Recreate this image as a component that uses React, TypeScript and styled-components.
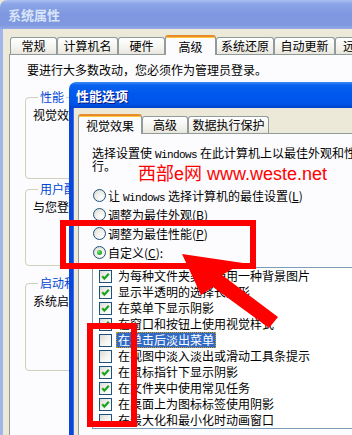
import React from 'react'
import styled, { createGlobalStyle, css } from 'styled-components'

const GlobalStyle = createGlobalStyle`
  html, body {
    margin: 0;
    padding: 0;
    overflow: hidden;
    background: #ece9d8;
  }
  body {
    font-family: "Noto Sans CJK SC", "Noto Sans", sans-serif;
    font-size: 12px;
    color: #000;
  }
`

const Screen = styled.div`
  position: relative;
  width: 352px;
  height: 435px;
  overflow: hidden;
`

const Window = styled.div`
  display: flex;
  flex-direction: column;
  width: 380px;
  height: 100%;
`

const TitleBar = styled.div<{ $active?: boolean }>`
  flex: none;
  height: ${({ $active }) => ($active ? 26 : 29)}px;
  display: flex;
  align-items: center;
  padding-left: ${({ $active }) => ($active ? 7 : 8)}px;
  border-radius: 7px 7px 0 0;
  font-size: 13px;
  font-weight: 700;
  white-space: nowrap;
  ${({ $active }) =>
    $active
      ? css`
          color: #fff;
          text-shadow: 1px 1px #0a1883;
          background: linear-gradient(#3d8df5 0%, #0a62ee 12%, #0058ee 45%, #0054e8 85%, #0040c8 100%);
        `
      : css`
          color: #d8e4f8;
          background: linear-gradient(#aabff2 0%, #8ca5e7 14%, #7e97e0 50%, #7f98e0 86%, #94aae8 100%);
        `}
`

const OuterBody = styled.div`
  flex: 1;
  min-height: 0;
  display: flex;
  flex-direction: column;
  background: #ece9d8;
  border-left: 3px solid #a2b5ea;
  padding: 6px 0 0 6px;
`

const DialogBody = styled.div`
  flex: 1;
  min-height: 0;
  display: flex;
  flex-direction: column;
  background: #ece9d8;
  border-left: 4px solid #0b46dc;
  box-shadow: inset 1px 0 #3a6ee8;
  padding: 6px 0 0 5px;
`

const TabRow = styled.div<{ $inset?: number }>`
  flex: none;
  display: flex;
  align-items: flex-end;
  height: 19px;
  padding-left: ${({ $inset }) => $inset ?? 0}px;
  position: relative;
  z-index: 1;
`

const Tab = styled.div<{ $w: number; $selected?: boolean }>`
  flex: none;
  box-sizing: border-box;
  width: ${({ $w }) => $w}px;
  height: ${({ $selected }) => ($selected ? 20 : 17)}px;
  margin-bottom: ${({ $selected }) => ($selected ? -1 : 0)}px;
  border: 1px solid #919b9c;
  border-bottom: none;
  border-radius: 3px 3px 0 0;
  display: flex;
  align-items: center;
  justify-content: center;
  white-space: nowrap;
  overflow: hidden;
  line-height: 14px;
  background: linear-gradient(#ffffff, #f4f3ee 60%, #e8e6dc);
  ${({ $selected }) =>
    $selected &&
    css`
      background: #fcfcfe;
      border-top: 2px solid #e68b2c;
      box-shadow: inset 0 1px #ffc83c;
      padding-top: 1px;
    `}
`

const Panel = styled.div<{ $pad: string }>`
  flex: 1;
  min-height: 0;
  overflow: hidden;
  background: #fcfcfe;
  border: 1px solid #919b9c;
  border-right: none;
  border-bottom: none;
  padding: ${({ $pad }) => $pad};
  display: flex;
  flex-direction: column;
  align-items: flex-start;
  & > * {
    flex: none;
  }
`

const Line = styled.div<{ $lh?: number; $ml?: number }>`
  line-height: ${({ $lh }) => $lh ?? 14}px;
  margin-left: ${({ $ml }) => $ml ?? 0}px;
  white-space: nowrap;
`

const Group = styled.fieldset<{ $h: number; $mt: number }>`
  box-sizing: border-box;
  width: 300px;
  height: ${({ $h }) => $h}px;
  margin: ${({ $mt }) => $mt}px 0 0 0;
  padding: 0 7px;
  min-width: 0;
  border: 1px solid #d0d0bf;
  border-radius: 4px;
`

const Legend = styled.legend`
  color: #0046d5;
  line-height: 14px;
  padding: 0 2px;
  margin-left: 5px;
`

const GroupText = styled.div`
  line-height: 14px;
  margin-top: 4px;
  white-space: nowrap;
`

const Dialog = styled.div`
  position: absolute;
  left: 69px;
  top: 82px;
  width: 300px;
  height: 360px;
  display: flex;
  flex-direction: column;
`

const Mono = styled.span`
  font-family: "Liberation Mono", "DejaVu Sans Mono", monospace;
  font-size: 11px;
  line-height: 0;
  letter-spacing: -0.6px;
  padding: 0 3px;
`

const RadioList = styled.div`
  margin-top: 14px;
  margin-left: 1px;
  display: flex;
  flex-direction: column;
`

const RadioRow = styled.div`
  height: 19px;
  flex: none;
  display: flex;
  align-items: center;
  white-space: nowrap;
`

const RadioText = styled.span`
  line-height: 14px;
`

const RadioCircle = styled.span<{ $on?: boolean }>`
  flex: none;
  box-sizing: border-box;
  width: 13px;
  height: 13px;
  margin-right: 2px;
  border-radius: 50%;
  border: 1px solid #1c5180;
  background: radial-gradient(circle at 65% 70%, #ffffff 0%, #f0f0ea 45%, #d6d6ce 100%);
  display: flex;
  align-items: center;
  justify-content: center;
  &::after {
    content: '';
    display: ${({ $on }) => ($on ? 'block' : 'none')};
    width: 5px;
    height: 5px;
    border-radius: 50%;
    background: radial-gradient(circle at 35% 35%, #6ee26e, #21a121 70%);
  }
`

const ListBox = styled.div`
  margin-top: 5px;
  width: 300px;
  border: 1px solid #7f9db9;
  border-right: none;
  background: #fff;
  display: flex;
  flex-direction: column;
`

const Item = styled.div`
  height: 16px;
  flex: none;
  display: flex;
  align-items: center;
  padding-left: 6px;
  white-space: nowrap;
`

const Box = styled.span`
  flex: none;
  box-sizing: border-box;
  width: 13px;
  height: 13px;
  margin-right: 5px;
  border: 1px solid #1c5180;
  background: linear-gradient(135deg, #dcdcd5 0%, #f2f2ee 50%, #ffffff 100%);
  display: flex;
  align-items: center;
  justify-content: center;
`

const ItemLabel = styled.span<{ $sel?: boolean }>`
  line-height: 14px;
  padding: 0 1px;
  border: 1px solid transparent;
  margin-left: -1px;
  ${({ $sel }) =>
    $sel &&
    css`
      background: #316ac5;
      color: #fff;
      border: 1px dotted #d8a000;
    `}
`

const Watermark = styled.div`
  position: absolute;
  left: 138px;
  top: 163px;
  color: #ff0000;
  font-family: "Liberation Sans", "Noto Sans CJK SC", sans-serif;
  font-size: 18px;
  line-height: 22px;
  white-space: nowrap;
`

const RedBox = styled.div<{ $x: number; $y: number; $w: number; $h: number }>`
  position: absolute;
  left: ${({ $x }) => $x}px;
  top: ${({ $y }) => $y}px;
  width: ${({ $w }) => $w}px;
  height: ${({ $h }) => $h}px;
  box-sizing: border-box;
  border: 6px solid #ff0000;
`

const Overlay = styled.svg`
  position: absolute;
  left: 0;
  top: 0;
  pointer-events: none;
`

const Check = () => (
  <svg width="9" height="9" viewBox="0 0 9 9">
    <polyline points="1.2,4.2 3.4,6.6 7.8,1.8" fill="none" stroke="#21a121" strokeWidth="2.2" />
  </svg>
)

const effects: [string, boolean][] = [
  ['为每种文件夹类型使用一种背景图片', true],
  ['显示半透明的选择长方形', true],
  ['在菜单下显示阴影', true],
  ['在窗口和按钮上使用视觉样式', true],
  ['在单击后淡出菜单', false],
  ['在视图中淡入淡出或滑动工具条提示', false],
  ['在鼠标指针下显示阴影', true],
  ['在文件夹中使用常见任务', true],
  ['在桌面上为图标标签使用阴影', true],
  ['在最大化和最小化时动画窗口', false],
]

export default function App() {
  return (
    <Screen>
      <GlobalStyle />
      <Window>
        <TitleBar>系统属性</TitleBar>
        <OuterBody>
          <TabRow $inset={1}>
            <Tab $w={47}>常规</Tab>
            <Tab $w={61}>计算机名</Tab>
            <Tab $w={47}>硬件</Tab>
            <Tab $w={51} $selected>高级</Tab>
            <Tab $w={58}>系统还原</Tab>
            <Tab $w={61}>自动更新</Tab>
            <Tab $w={40}>远程</Tab>
          </TabRow>
          <Panel $pad="8px 0 0 15px">
            <Line $ml={2}>要进行大多数改动，您必须作为管理员登录。</Line>
            <Group $h={89} $mt={13}>
              <Legend>性能</Legend>
              <GroupText>视觉效果，处理器计划，内存使用，以及虚拟内存</GroupText>
            </Group>
            <Group $h={84} $mt={3}>
              <Legend>用户配置文件</Legend>
              <GroupText>与您登录有关的桌面设置</GroupText>
            </Group>
            <Group $h={95} $mt={10}>
              <Legend>启动和故障恢复</Legend>
              <GroupText>系统启动、系统失败和调试信息</GroupText>
            </Group>
          </Panel>
        </OuterBody>
      </Window>

      <Dialog>
        <TitleBar $active>性能选项</TitleBar>
        <DialogBody>
          <TabRow>
            <Tab $w={64} $selected>视觉效果</Tab>
            <Tab $w={46}>高级</Tab>
            <Tab $w={81}>数据执行保护</Tab>
          </TabRow>
          <Panel $pad="12px 0 0 13px">
            <Line $lh={13}>
              选择设置使<Mono>Windows</Mono>在此计算机上以最佳外观和性能运
            </Line>
            <Line $lh={13}>行。</Line>
            <RadioList>
              <RadioRow>
                <RadioCircle />
                <RadioText>
                  让<Mono>Windows</Mono>选择计算机的最佳设置(<u>L</u>)
                </RadioText>
              </RadioRow>
              <RadioRow>
                <RadioCircle />
                <RadioText>
                  调整为最佳外观(<u>B</u>)
                </RadioText>
              </RadioRow>
              <RadioRow>
                <RadioCircle />
                <RadioText>
                  调整为最佳性能(<u>P</u>)
                </RadioText>
              </RadioRow>
              <RadioRow>
                <RadioCircle $on />
                <RadioText>
                  自定义(<u>C</u>):
                </RadioText>
              </RadioRow>
            </RadioList>
            <ListBox>
              {effects.map(([label, on], i) => (
                <Item key={label}>
                  <Box>{on && <Check />}</Box>
                  <ItemLabel $sel={i === 4}>{label}</ItemLabel>
                </Item>
              ))}
            </ListBox>
          </Panel>
        </DialogBody>
      </Dialog>

      <Watermark>西部e网 www.weste.net</Watermark>
      <RedBox $x={60} $y={220} $w={196} $h={49} />
      <RedBox $x={87} $y={323} $w={50} $h={104} />
      <Overlay width="352" height="435" viewBox="0 0 352 435">
        <polygon points="182,254 243,263 222,275 278,317 269,328 213,287 201,295" fill="#ff0000" />
      </Overlay>
    </Screen>
  )
}
